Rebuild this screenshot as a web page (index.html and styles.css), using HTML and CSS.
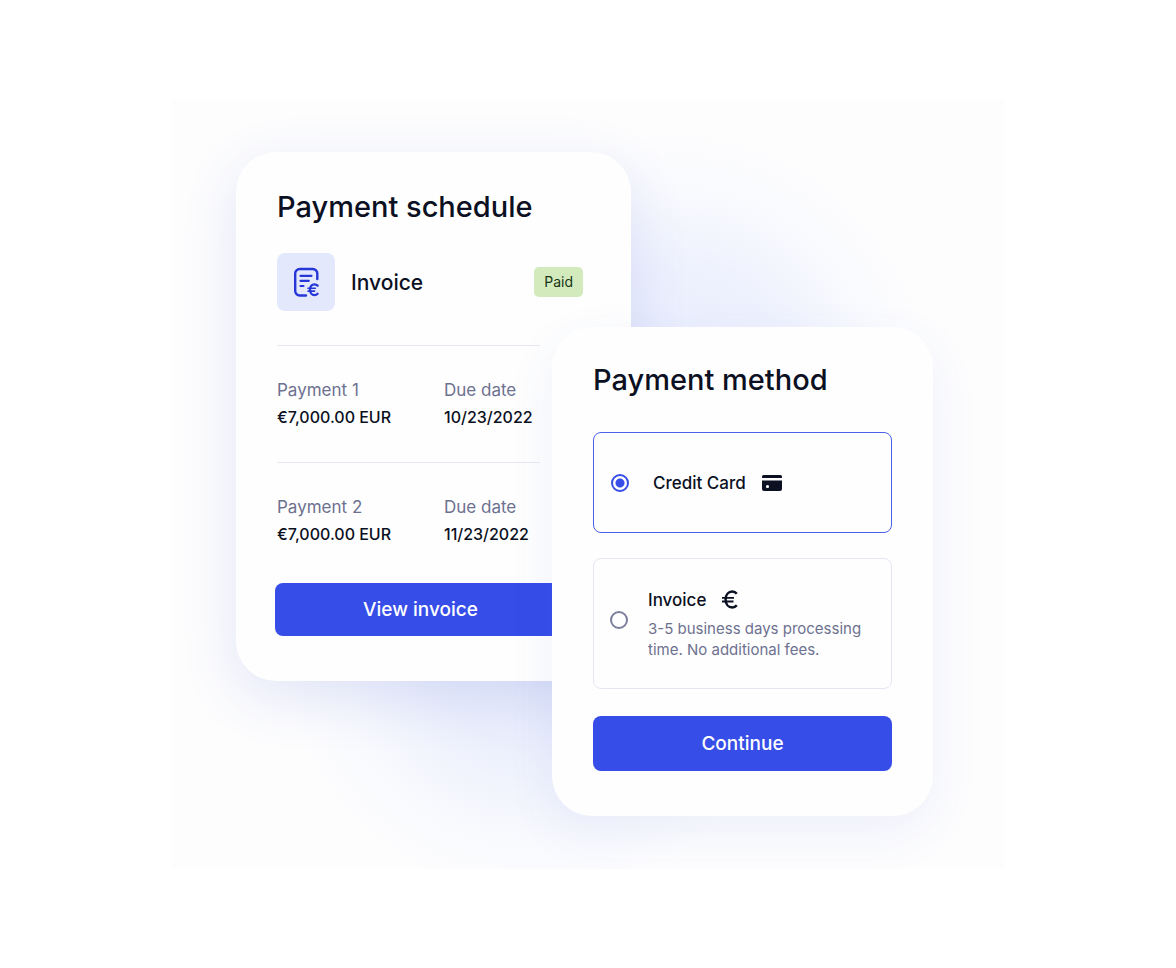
FILE: index.html
```html
<!DOCTYPE html>
<html lang="en">
<head>
<meta charset="utf-8">
<meta name="viewport" content="width=device-width, initial-scale=1">
<title>Payments</title>
<link rel="stylesheet" href="styles.css">
</head>
<body>
<main class="stage">
  <section class="card schedule" aria-labelledby="schedule-title">
    <h2 class="title" id="schedule-title">Payment schedule</h2>
    <div class="summary">
      <span class="tile">
        <svg width="26" height="30" viewBox="0 0 26 30" fill="none" stroke="currentColor" stroke-width="2.400" stroke-linecap="round" stroke-linejoin="round" aria-hidden="true">
          <path d="M24.300 12V6.500A4.500 4.500 0 0 0 19.800 2H6.700A4.500 4.500 0 0 0 2.200 6.500V24A4.500 4.500 0 0 0 6.700 28.500H13"/>
          <path d="M7.500 8.800H18.500M7.500 13.800H15.800M7.500 19H10.500" stroke-width="2.200"/>
          <path d="M24.600 18.600C23.700 17.700 22.700 17.300 21.600 17.300C18.800 17.300 17 19.600 17 22.700C17 25.800 18.800 28.100 21.600 28.100C22.700 28.100 23.700 27.700 24.600 26.800" stroke-width="2.300"/>
          <path d="M15 21.300H22.300M15 24.100H21.600" stroke-width="1.600"/>
        </svg>
      </span>
      <span class="summary-name">Invoice</span>
      <span class="badge">Paid</span>
    </div>
    <dl class="payment">
      <div><dt>Payment 1</dt><dd>€7,000.00 EUR</dd></div>
      <div><dt>Due date</dt><dd>10/23/2022</dd></div>
    </dl>
    <dl class="payment">
      <div><dt>Payment 2</dt><dd>€7,000.00 EUR</dd></div>
      <div><dt>Due date</dt><dd>11/23/2022</dd></div>
    </dl>
    <button class="button view" type="button">View invoice</button>
  </section>

  <form class="card method" aria-labelledby="method-title">
    <h2 class="title" id="method-title">Payment method</h2>
    <div class="options">
      <label class="option option-card">
        <input class="radio" type="radio" name="method" value="card" checked>
        <span class="option-name">Credit Card
          <svg width="20" height="16" viewBox="0 0 20 16" fill="currentColor" aria-hidden="true">
            <path d="M1.500 0H18.500Q20 0 20 1.500V3H0V1.500Q0 0 1.500 0Z"/>
            <path fill-rule="evenodd" d="M0 5.500H20V14Q20 16 18 16H2Q0 16 0 14ZM5.500 9.900A1.600 1.600 0 1 0 5.500 13.100A1.600 1.600 0 1 0 5.500 9.900Z"/>
          </svg>
        </span>
      </label>
      <label class="option option-invoice">
        <input class="radio" type="radio" name="method" value="invoice">
        <span class="option-body">
          <span class="option-name">Invoice
            <svg width="16" height="20" viewBox="0 0 16 20" fill="none" stroke="currentColor" stroke-width="2.500" aria-hidden="true">
              <path d="M14.800 3.700C13.500 2.100 12.100 1.500 10.300 1.500C6.400 1.500 3.600 4.700 3.600 9.500C3.600 14.300 6.400 17.500 10.300 17.500C12.100 17.500 13.500 16.900 14.800 15.300"/>
              <path d="M0 7.900H12M0 11.500H11.500" stroke-width="1.900"/>
            </svg>
          </span>
          <span class="option-note">3-5 business days processing time. No additional fees.</span>
        </span>
      </label>
    </div>
    <button class="button" type="button">Continue</button>
  </form>
</main>
</body>
</html>
```
FILE: styles.css
```css
* {
  box-sizing: border-box;
}

body {
  margin: 0;
  min-height: 100vh;
  display: flex;
  align-items: center;
  justify-content: center;
  background: #fff;
  color: #0b1022;
  font-family: Inter, "Liberation Sans", sans-serif;
}

.stage {
  display: flex;
  align-items: flex-start;
  width: 100%;
  max-width: 832px;
  padding: 53px 71px 53px 64px;
  overflow: hidden;
  background:
    radial-gradient(circle at 60% 38%, rgba(218, 226, 253, 0.6) 0, rgba(218, 226, 253, 0.45) 120px, rgba(218, 226, 253, 0.12) 200px, rgba(218, 226, 253, 0) 260px),
    radial-gradient(circle at 44% 70%, rgba(214, 223, 250, 0.6) 0, rgba(214, 223, 250, 0.45) 110px, rgba(214, 223, 250, 0.12) 200px, rgba(214, 223, 250, 0) 260px),
    #fdfdfe;
}

.card {
  border-radius: 40px;
  background: #fefefe;
}

.schedule {
  flex: 0 1 395px;
  padding: 35px 48px 45px 41px;
  box-shadow: 0 16px 56px rgba(64, 86, 200, 0.14);
}

.method {
  flex: 0 1 381px;
  margin: 175px 0 0 -79px;
  padding: 33px 41px 45px;
  box-shadow: 0 16px 48px rgba(64, 86, 200, 0.08);
}

.title {
  margin: 0;
  font-size: 29px;
  font-weight: 500;
  line-height: 40px;
  white-space: nowrap;
}

.summary {
  display: flex;
  align-items: center;
  gap: 16px;
  margin: 26px 0 34px;
}

.tile {
  display: grid;
  place-items: center;
  width: 58px;
  height: 58px;
  border-radius: 8px;
  background: #e3e8fc;
  color: #2636d9;
}

.summary-name {
  font-size: 21px;
  font-weight: 500;
}

.badge {
  margin-left: auto;
  padding: 0 10px;
  border-radius: 5px;
  background: #d3eabc;
  color: #173518;
  font-size: 14px;
  line-height: 30px;
}

.payment {
  display: grid;
  grid-template-columns: 167px 1fr;
  margin: 0 43px 0 0;
  padding: 31px 0;
  border-top: 1px solid #e7e8f5;
  font-size: 17px;
  line-height: 27px;
  white-space: nowrap;
}

.payment dt {
  color: #6d7190;
}

.payment dd {
  margin: 0;
  font-size: 16px;
  font-weight: 500;
}

.button {
  display: block;
  width: 100%;
  height: 55px;
  border: 0;
  border-radius: 8px;
  background: #364de8;
  color: #fff;
  font: 500 19px Inter, "Liberation Sans", sans-serif;
  cursor: pointer;
}

.view {
  width: 291px;
  height: 53px;
  margin: 4px 0 0 -2px;
}

.options {
  display: grid;
  gap: 25px;
  margin: 32px 0 27px;
}

.option {
  display: flex;
  align-items: center;
  padding: 0 17px;
  border: 1px solid #e5e6f4;
  border-radius: 8px;
  cursor: pointer;
}

.option:has(:checked) {
  border-color: #4a5fea;
}

.option-card {
  gap: 24px;
  min-height: 101px;
}

.option-invoice {
  gap: 20px;
  min-height: 131px;
  padding: 0 16px;
}

.option-invoice .radio {
  margin-bottom: 8px;
}

.radio {
  flex: none;
  appearance: none;
  width: 18px;
  height: 18px;
  margin: 0;
  border: 2px solid #7b7f9c;
  border-radius: 50%;
}

.radio:checked {
  border-color: #364de8;
  background: radial-gradient(circle, #364de8 4px, transparent 5px);
}

.option-name {
  display: flex;
  align-items: center;
  gap: 16px;
  font-size: 17px;
  font-weight: 500;
  line-height: 24px;
}

.option-note {
  display: block;
  margin-top: 6px;
  color: #6d7190;
  font-size: 15px;
  line-height: 21px;
}
```
